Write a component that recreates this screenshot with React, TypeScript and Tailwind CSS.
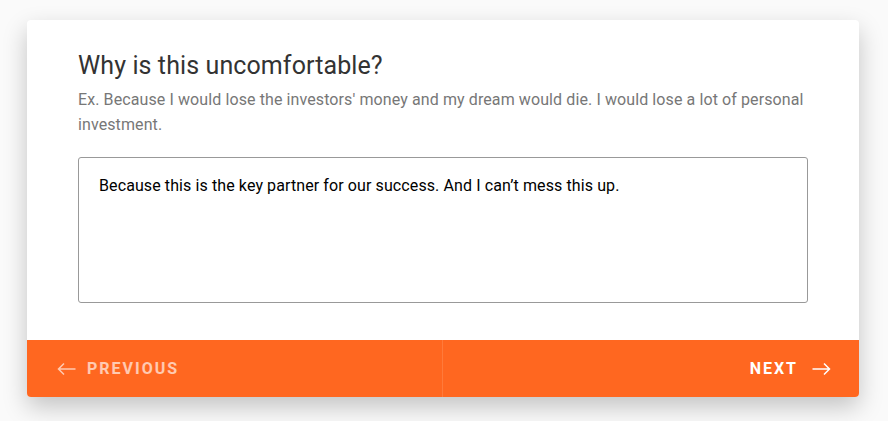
import React from "react";

export default function App() {
  return (
    <div className="w-[888px] h-[421px] bg-[#fafafa] pt-[20px] pl-[27px]" style={{ fontFamily: "Roboto, 'Liberation Sans', sans-serif" }}>
      <div className="w-[832px] bg-white rounded-[4px] shadow-[0_10px_24px_rgba(0,0,0,0.22)]">
        <div className="pl-[51px] pr-[51px] pt-[31px] pb-[37px] tracking-[0.1px]">
          <h1 className="text-[25px] leading-[30px] text-[#333] font-normal">Why is this uncomfortable?</h1>
          <p className="mt-[6px] text-[16px] leading-[25px] text-[#777] w-[730px]">
            Ex. Because I would lose the investors' money and my dream would die. I would lose a lot of personal investment.
          </p>
          <div className="mt-[20px] h-[146px] border border-[#999] rounded-[3px] pl-[20px] pt-[16px] text-[16px] leading-[24px] text-black">
            Because this is the key partner for our success. And I can’t mess this up.
          </div>
        </div>
        <div className="flex h-[57px] bg-[#ff6720] rounded-b-[4px] text-[16px] font-bold tracking-[2px]">
          <div className="w-[416px] flex items-center pl-[30px] gap-[11px] text-white/65 border-r border-[#ff7a3a]">
            <svg width="19" height="14" viewBox="0 0 19 14" fill="none" stroke="currentColor" strokeWidth="1.5">
              <path d="M18.5 7H1.5M7 1.5L1.5 7L7 12.5" />
            </svg>
            <span>PREVIOUS</span>
          </div>
          <div className="flex-1 flex items-center justify-end pr-[28px] gap-[14px] text-white">
            <span>NEXT</span>
            <svg width="19" height="14" viewBox="0 0 19 14" fill="none" stroke="currentColor" strokeWidth="1.5">
              <path d="M0.5 7H17.5M12 1.5L17.5 7L12 12.5" />
            </svg>
          </div>
        </div>
      </div>
    </div>
  );
}
